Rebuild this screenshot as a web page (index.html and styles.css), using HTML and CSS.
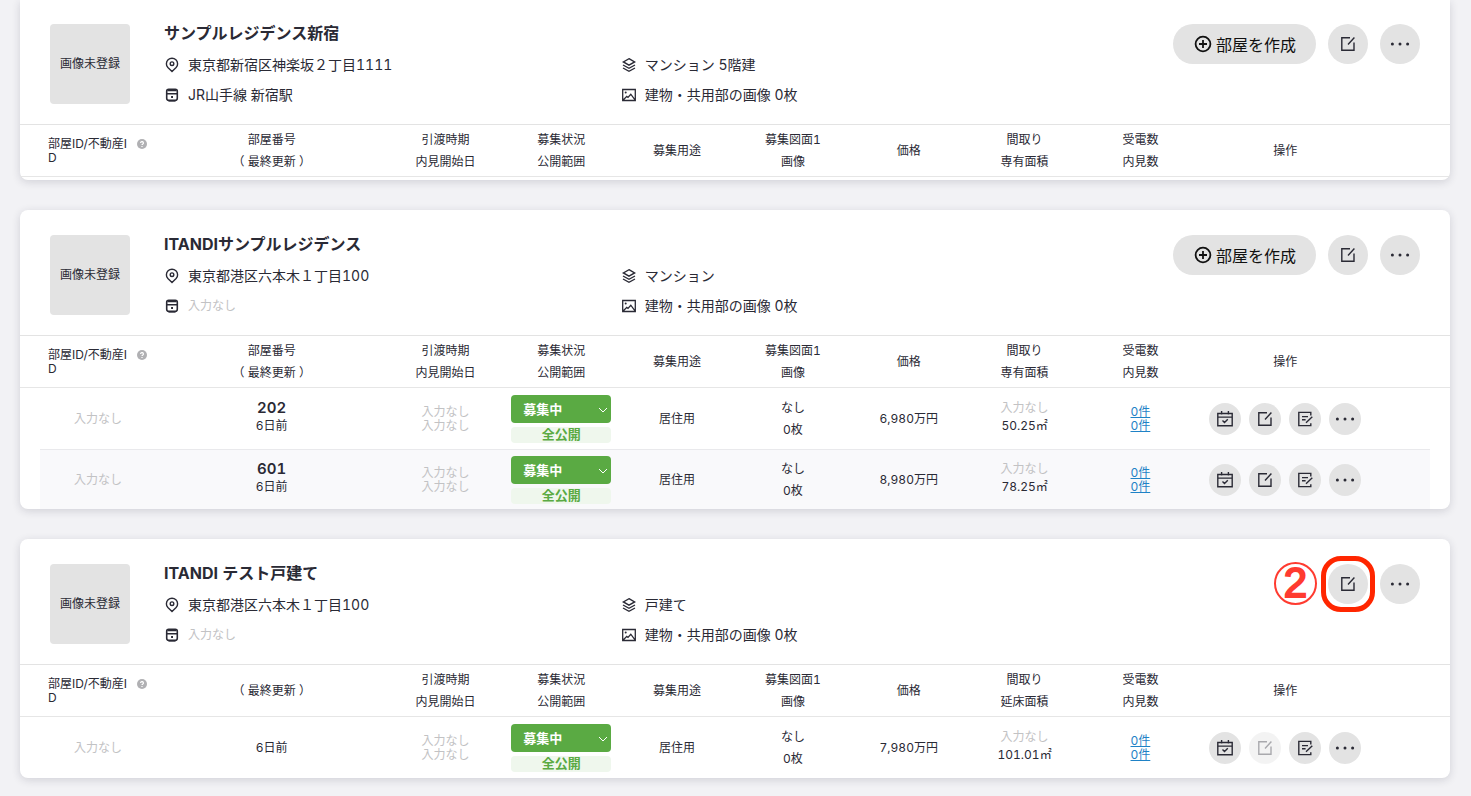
FILE: index.html
```html
<!DOCTYPE html>
<html lang="ja">
<head>
<meta charset="utf-8">
<meta name="viewport" content="width=device-width, initial-scale=1">
<title>物件一覧</title>
<link rel="stylesheet" href="styles.css">
</head>
<body>
<svg class="sprite" aria-hidden="true">
  <symbol id="pin" viewBox="0 0 16 16"><path d="M8 14.5 3.9 10.6A5.6 5.6 0 1 1 12.1 10.6Z"/><circle cx="8" cy="6.7" r="1.8"/></symbol>
  <symbol id="train" viewBox="0 0 16 16"><rect x="2.7" y="2.2" width="10.6" height="11" rx="2" stroke-width="1.6"/><path d="M3.5 3.4h9M3 6.7h10" stroke-width="1.6"/><path d="M4.4 14h7.2" stroke-width="1.4"/><path d="M7.1 9h1.9v1.9H7.1z" fill="currentColor" stroke="none"/></symbol>
  <symbol id="layers" viewBox="0 0 16 16"><path d="M8 1.7 13.6 4.9 8 8.1 2.4 4.9ZM2 8l6 3.3L14 8M2 11l6 3.3 6-3.3"/></symbol>
  <symbol id="image" viewBox="0 0 16 16"><path d="M1.7 2.5h12.6v11H1.7ZM2.2 13l3.6-3.6 1.2 1 2.8-3.2 4.2 5.6" stroke-width="1.3"/><circle cx="4.7" cy="5.5" r="1" fill="currentColor" stroke="none"/></symbol>
  <symbol id="plus" viewBox="0 0 20 20"><circle cx="10" cy="10" r="7.4"/><path d="M10 6v8M6 10h8"/></symbol>
  <symbol id="edit" viewBox="0 0 16 16"><path d="M10 1.8H1.8v12.4h12.2V6.5M8 8.5l6.4-6.9"/></symbol>
  <symbol id="more" viewBox="0 0 20 16"><g fill="currentColor" stroke="none"><circle cx="2.4" cy="8" r="1.5"/><circle cx="10" cy="8" r="1.5"/><circle cx="17.6" cy="8" r="1.5"/></g></symbol>
  <symbol id="calendar" viewBox="0 0 16 16"><path d="M.8 2.5h14.4v12.2H.8ZM1 6.1h14M4.6 0v3.6M11.4 0v3.6M5.5 9.5l2 2 3.3-3.2"/></symbol>
  <symbol id="note" viewBox="0 0 16 16"><path d="M13.8 4.5V1.4H1.8v13.2h12v-2.4M5 5.6h6M5 8.8h3.6M9 11.8l6.3-6"/></symbol>
  <symbol id="help" viewBox="0 0 10 10"><circle cx="5" cy="5" r="5" fill="#b0b0b3" stroke="none"/><path d="M3.6 4a1.4 1.4 0 1 1 2 1.2Q5 5.5 5 6M5 7v1" stroke="#fff" stroke-width="1.2"/></symbol>
</svg>

<main class="page">
  <section class="card card-first">
    <header class="building">
      <div class="thumb">画像未登録</div>
      <div class="info">
        <h2>サンプルレジデンス新宿</h2>
        <div class="details">
          <p><svg class="icon"><use href="#pin"/></svg>東京都新宿区神楽坂２丁目1111</p>
          <p><svg class="icon"><use href="#layers"/></svg>マンション 5階建</p>
          <p><svg class="icon"><use href="#train"/></svg>JR山手線 新宿駅</p>
          <p><svg class="icon"><use href="#image"/></svg>建物・共用部の画像 0枚</p>
        </div>
      </div>
      <div class="actions">
        <button class="create" type="button"><svg class="icon-plus"><use href="#plus"/></svg>部屋を作成</button>
        <button class="round" type="button" aria-label="編集"><svg class="icon"><use href="#edit"/></svg></button>
        <button class="round" type="button" aria-label="メニュー"><svg class="icon-more"><use href="#more"/></svg></button>
      </div>
    </header>
    <table class="rooms">
      <thead>
        <tr>
          <th class="id"><span>部屋ID/不動産ID</span><svg class="icon-help"><use href="#help"/></svg></th>
          <th>部屋番号<br>（ 最終更新 ）</th>
          <th>引渡時期<br>内見開始日</th>
          <th>募集状況<br>公開範囲</th>
          <th>募集用途</th>
          <th>募集図面1<br>画像</th>
          <th>価格</th>
          <th>間取り<br>専有面積</th>
          <th>受電数<br>内見数</th>
          <th>操作</th>
        </tr>
      </thead>
    </table>
  </section>

  <section class="card">
    <header class="building">
      <div class="thumb">画像未登録</div>
      <div class="info">
        <h2>ITANDIサンプルレジデンス</h2>
        <div class="details">
          <p><svg class="icon"><use href="#pin"/></svg>東京都港区六本木１丁目100</p>
          <p><svg class="icon"><use href="#layers"/></svg>マンション</p>
          <p><svg class="icon"><use href="#train"/></svg><span class="empty">入力なし</span></p>
          <p><svg class="icon"><use href="#image"/></svg>建物・共用部の画像 0枚</p>
        </div>
      </div>
      <div class="actions">
        <button class="create" type="button"><svg class="icon-plus"><use href="#plus"/></svg>部屋を作成</button>
        <button class="round" type="button" aria-label="編集"><svg class="icon"><use href="#edit"/></svg></button>
        <button class="round" type="button" aria-label="メニュー"><svg class="icon-more"><use href="#more"/></svg></button>
      </div>
    </header>
    <table class="rooms">
      <thead>
        <tr>
          <th class="id"><span>部屋ID/不動産ID</span><svg class="icon-help"><use href="#help"/></svg></th>
          <th>部屋番号<br>（ 最終更新 ）</th>
          <th>引渡時期<br>内見開始日</th>
          <th>募集状況<br>公開範囲</th>
          <th>募集用途</th>
          <th>募集図面1<br>画像</th>
          <th>価格</th>
          <th>間取り<br>専有面積</th>
          <th>受電数<br>内見数</th>
          <th>操作</th>
        </tr>
      </thead>
      <tbody>
        <tr>
          <td class="empty">入力なし</td>
          <td class="room"><strong>202</strong>6日前</td>
          <td class="tight empty">入力なし<br>入力なし</td>
          <td><div class="status"><div class="picker"><select aria-label="募集状況"><option>募集中</option></select><svg viewBox="0 0 10 6"><path d="M1 1l4 4 4-4"/></svg></div><span class="scope">全公開</span></div></td>
          <td>居住用</td>
          <td>なし<br>0枚</td>
          <td>6,980万円</td>
          <td class="room"><span class="empty">入力なし</span>50.25㎡</td>
          <td class="tight"><a href="#">0件</a><br><a href="#">0件</a></td>
          <td class="ops">
            <button type="button" aria-label="予約"><svg class="icon"><use href="#calendar"/></svg></button>
            <button type="button" aria-label="編集"><svg class="icon"><use href="#edit"/></svg></button>
            <button type="button" aria-label="メモ"><svg class="icon"><use href="#note"/></svg></button>
            <button type="button" aria-label="メニュー"><svg class="icon-more"><use href="#more"/></svg></button>
          </td>
        </tr>
        <tr>
          <td class="empty">入力なし</td>
          <td class="room"><strong>601</strong>6日前</td>
          <td class="tight empty">入力なし<br>入力なし</td>
          <td><div class="status"><div class="picker"><select aria-label="募集状況"><option>募集中</option></select><svg viewBox="0 0 10 6"><path d="M1 1l4 4 4-4"/></svg></div><span class="scope">全公開</span></div></td>
          <td>居住用</td>
          <td>なし<br>0枚</td>
          <td>8,980万円</td>
          <td class="room"><span class="empty">入力なし</span>78.25㎡</td>
          <td class="tight"><a href="#">0件</a><br><a href="#">0件</a></td>
          <td class="ops">
            <button type="button" aria-label="予約"><svg class="icon"><use href="#calendar"/></svg></button>
            <button type="button" aria-label="編集"><svg class="icon"><use href="#edit"/></svg></button>
            <button type="button" aria-label="メモ"><svg class="icon"><use href="#note"/></svg></button>
            <button type="button" aria-label="メニュー"><svg class="icon-more"><use href="#more"/></svg></button>
          </td>
        </tr>
      </tbody>
    </table>
  </section>

  <section class="card">
    <header class="building">
      <div class="thumb">画像未登録</div>
      <div class="info">
        <h2>ITANDI テスト戸建て</h2>
        <div class="details">
          <p><svg class="icon"><use href="#pin"/></svg>東京都港区六本木１丁目100</p>
          <p><svg class="icon"><use href="#layers"/></svg>戸建て</p>
          <p><svg class="icon"><use href="#train"/></svg><span class="empty">入力なし</span></p>
          <p><svg class="icon"><use href="#image"/></svg>建物・共用部の画像 0枚</p>
        </div>
      </div>
      <div class="actions">
        <div class="marked">
          <button class="round" type="button" aria-label="編集"><svg class="icon"><use href="#edit"/></svg></button>
          <span class="step">2</span>
          <span class="frame"></span>
        </div>
        <button class="round" type="button" aria-label="メニュー"><svg class="icon-more"><use href="#more"/></svg></button>
      </div>
    </header>
    <table class="rooms">
      <thead>
        <tr>
          <th class="id"><span>部屋ID/不動産ID</span><svg class="icon-help"><use href="#help"/></svg></th>
          <th>（ 最終更新 ）</th>
          <th>引渡時期<br>内見開始日</th>
          <th>募集状況<br>公開範囲</th>
          <th>募集用途</th>
          <th>募集図面1<br>画像</th>
          <th>価格</th>
          <th>間取り<br>延床面積</th>
          <th>受電数<br>内見数</th>
          <th>操作</th>
        </tr>
      </thead>
      <tbody>
        <tr>
          <td class="empty">入力なし</td>
          <td>6日前</td>
          <td class="tight empty">入力なし<br>入力なし</td>
          <td><div class="status"><div class="picker"><select aria-label="募集状況"><option>募集中</option></select><svg viewBox="0 0 10 6"><path d="M1 1l4 4 4-4"/></svg></div><span class="scope">全公開</span></div></td>
          <td>居住用</td>
          <td>なし<br>0枚</td>
          <td>7,980万円</td>
          <td class="room"><span class="empty">入力なし</span>101.01㎡</td>
          <td class="tight"><a href="#">0件</a><br><a href="#">0件</a></td>
          <td class="ops">
            <button type="button" aria-label="予約"><svg class="icon"><use href="#calendar"/></svg></button>
            <button type="button" aria-label="編集" disabled><svg class="icon"><use href="#edit"/></svg></button>
            <button type="button" aria-label="メモ"><svg class="icon"><use href="#note"/></svg></button>
            <button type="button" aria-label="メニュー"><svg class="icon-more"><use href="#more"/></svg></button>
          </td>
        </tr>
      </tbody>
    </table>
  </section>
</main>
</body>
</html>
```

FILE: styles.css
```css
* { box-sizing: border-box; }

body {
  margin: 0;
  background: #f2f2f5;
  color: #2a2a35;
  font: 12px/22px Inter, "Noto Sans CJK JP", sans-serif;
  font-variant-numeric: tabular-nums;
}

h2, p { margin: 0; }

button, select { font-family: inherit; }

button {
  display: flex;
  align-items: center;
  justify-content: center;
  padding: 0;
  border: 0;
  background: #e3e3e3;
  color: #2a2a35;
}

svg {
  flex: none;
  fill: none;
  stroke: currentColor;
  stroke-width: 1.4;
}

.sprite { position: absolute; width: 0; height: 0; }
.icon { width: 16px; height: 16px; }
.icon-more { width: 20px; height: 16px; }
.icon-plus { width: 20px; height: 20px; stroke-width: 1.8; }
.icon-help { width: 10px; height: 10px; margin-top: 2px; }

.page {
  display: flex;
  flex-direction: column;
  gap: 30px;
  padding: 0 21px 16px 20px;
}

.card {
  border-radius: 8px;
  background: #fff;
  box-shadow: 0 2px 8px rgba(40, 40, 60, 0.16);
}

.card-first {
  padding-bottom: 3px;
  border-radius: 0 0 8px 8px;
}

.building {
  display: flex;
  padding: 25px 30px 14px;
  border-bottom: 1px solid #e3e3e3;
}

.card-first .building { padding-top: 24px; }

.thumb {
  display: flex;
  flex: none;
  align-items: center;
  justify-content: center;
  width: 80px;
  height: 80px;
  margin-right: 34px;
  border-radius: 4px;
  background: #e3e3e3;
}

.info { width: 66.6667%; }

.info h2 {
  margin-bottom: 8px;
  font-size: 16px;
  font-weight: 700;
  line-height: 18px;
}

.details {
  display: grid;
  grid-template-columns: 1fr 1fr;
  font-size: 14px;
  line-height: 30px;
}

.details p {
  display: flex;
  align-items: center;
  gap: 8px;
}

.details .empty { font-size: 12px; }

.empty { color: #c2c2c4; }

.actions {
  display: flex;
  flex: 1;
  justify-content: flex-end;
  align-items: flex-start;
  gap: 12px;
}

.create {
  gap: 3px;
  height: 40px;
  padding: 0 20px;
  border-radius: 20px;
  color: #111;
  font-size: 16px;
  white-space: nowrap;
}

.round {
  width: 40px;
  height: 40px;
  border-radius: 50%;
}

.marked { position: relative; }

.frame {
  position: absolute;
  inset: -8px -7px;
  border: 5px solid #ff2600;
  border-radius: 20px;
}

.step {
  position: absolute;
  top: -2px;
  right: 51px;
  width: 43px;
  height: 43px;
  border: 2px solid #ff3b30;
  border-radius: 50%;
  color: #ff3b30;
  font: 42px/38px "Liberation Sans", sans-serif;
  text-align: center;
  -webkit-text-stroke: 2px #ff3b30;
}

.rooms, .rooms thead, .rooms tbody { display: block; }

.rooms tr {
  display: grid;
  grid-template-columns: minmax(0, 2fr) minmax(0, 4fr) repeat(7, minmax(0, 2fr)) minmax(0, 3fr) minmax(0, 1fr);
  align-items: center;
}

.rooms thead tr {
  min-height: 52px;
  padding: 0 20px;
  border-bottom: 1px solid #e6e6e6;
}

.rooms tbody { margin: 0 20px; }

.rooms tbody tr { min-height: 61px; }

.rooms tbody tr + tr {
  min-height: 60px;
  border-top: 1px solid #e9e9ec;
  background: #f9f9fb;
}

.rooms th, .rooms td {
  padding: 0;
  font-weight: 400;
  text-align: center;
  white-space: nowrap;
}

.rooms .id {
  display: flex;
  gap: 5px;
  padding-left: 8px;
  line-height: 14px;
  text-align: left;
  white-space: normal;
}

.id span {
  width: 84px;
  word-break: break-all;
}

.rooms .tight { line-height: 14px; }

.rooms .room {
  padding-bottom: 3px;
  line-height: 18px;
}

.room strong, .room .empty { display: block; }

.room strong {
  font-size: 15px;
  font-weight: 600;
}

.status {
  display: flex;
  flex-direction: column;
  gap: 4px;
  width: 100px;
  margin: 0 auto;
  font-weight: 700;
}

.picker { position: relative; height: 28px; }

.picker select {
  display: block;
  width: 100%;
  height: 100%;
  padding: 0 12px;
  border: 0;
  border-radius: 4px;
  background: #5aaa43;
  color: #fff;
  font-size: 13px;
  font-weight: 700;
  appearance: none;
}

.picker svg {
  position: absolute;
  top: 12px;
  right: 3px;
  width: 10px;
  height: 6px;
  color: #fff;
  stroke-width: 1;
  pointer-events: none;
}

.scope {
  padding-bottom: 2px;
  border-radius: 4px;
  background: #eff7ed;
  color: #5aaa43;
  font-size: 13px;
  line-height: 14px;
}

.rooms a { color: #1f82c6; }

.rooms .ops {
  display: flex;
  justify-content: center;
  gap: 8px;
}

.ops button {
  flex: none;
  width: 32px;
  height: 32px;
  border-radius: 50%;
}

.ops button:disabled { opacity: 0.4; }
```
